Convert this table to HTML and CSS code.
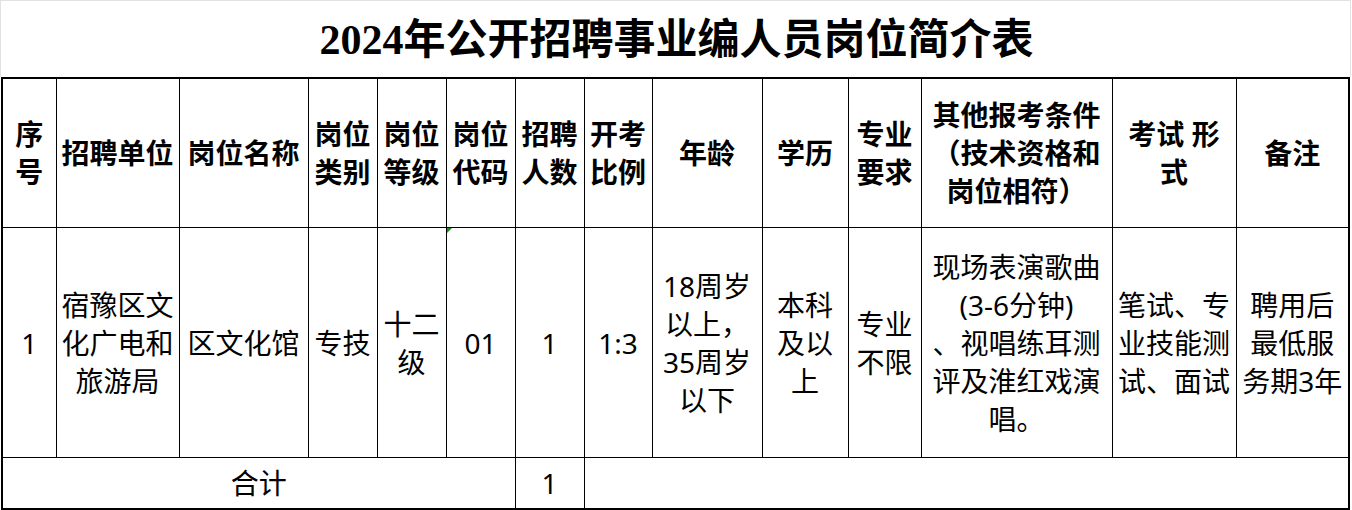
FILE: index.html
```html
<!DOCTYPE html>
<html lang="zh-CN">
<head>
<meta charset="utf-8">
<title>2024年公开招聘事业编人员岗位简介表</title>
<link rel="stylesheet" href="styles.css">
</head>
<body>
<div class="sheet">
  <div class="title"><span class="num">2024</span>年公开招聘事业编人员岗位简介表</div>
  <table class="grid">
    <colgroup>
      <col class="c1"><col class="c2"><col class="c3"><col class="c4"><col class="c5">
      <col class="c6"><col class="c7"><col class="c8"><col class="c9"><col class="c10">
      <col class="c11"><col class="c12"><col class="c13"><col class="c14">
    </colgroup>
    <tr class="head">
      <th>序<br>号</th>
      <th>招聘单位</th>
      <th>岗位名称</th>
      <th>岗位<br>类别</th>
      <th>岗位<br>等级</th>
      <th>岗位<br>代码</th>
      <th>招聘<br>人数</th>
      <th>开考<br>比例</th>
      <th>年龄</th>
      <th>学历</th>
      <th>专业<br>要求</th>
      <th>其他报考条件<br>（技术资格和<br>岗位相符）</th>
      <th>考试 形<br>式</th>
      <th>备注</th>
    </tr>
    <tr class="body">
      <td>1</td>
      <td>宿豫区文<br>化广电和<br>旅游局</td>
      <td>区文化馆</td>
      <td>专技</td>
      <td>十二<br>级</td>
      <td class="flag">01</td>
      <td>1</td>
      <td>1:3</td>
      <td>18周岁<br>以上，<br>35周岁<br>以下</td>
      <td>本科<br>及以<br>上</td>
      <td>专业<br>不限</td>
      <td>现场表演歌曲<br>(3-6分钟)<br>、视唱练耳测<br>评及淮红戏演<br>唱。</td>
      <td>笔试、专<br>业技能测<br>试、面试</td>
      <td>聘用后<br>最低服<br>务期3年</td>
    </tr>
    <tr class="foot">
      <td colspan="6">合计</td>
      <td>1</td>
      <td colspan="7"></td>
    </tr>
  </table>
</div>
</body>
</html>
```
FILE: styles.css
```css
html, body {
  margin: 0;
  padding: 0;
  background: #ffffff;
}
body {
  font-family: "Noto Sans", "Noto Sans CJK SC", sans-serif;
  color: #000000;
}
.sheet {
  width: 1351px;
}
.title {
  height: 75px;
  border-top: 1px solid #e2e2e2;
  border-left: 1px solid #e2e2e2;
  border-right: 1px solid #e2e2e2;
  display: flex;
  align-items: center;
  justify-content: center;
  font-family: "Liberation Serif", "Noto Sans CJK SC", serif;
  font-weight: 700;
  font-size: 42px;
  line-height: 1;
  padding-left: 2px;
  padding-top: 1px;
}
.title .num {
  font-family: "Liberation Serif", serif;
}
.grid {
  border-collapse: collapse;
  table-layout: fixed;
  width: 1348px;
  margin-left: 1px;
  border: 2px solid #000;
}
.grid th, .grid td {
  border: 1px solid #000;
  padding: 0;
  text-align: center;
  vertical-align: middle;
  font-size: 28px;
  line-height: 38px;
  white-space: nowrap;
  overflow: hidden;
}
.grid th {
  font-weight: 700;
}
.grid td {
  font-weight: 400;
}
.c1 { width: 54px; }
.c2 { width: 123px; }
.c3 { width: 129px; }
.c4 { width: 69px; }
.c5 { width: 69px; }
.c6 { width: 69px; }
.c7 { width: 69px; }
.c8 { width: 68px; }
.c9 { width: 110px; }
.c10 { width: 86px; }
.c11 { width: 73px; }
.c12 { width: 191px; }
.c13 { width: 124px; }
.c14 { width: 113px; }
.head th { height: 148px; }
.body td { height: 229px; }
.foot td { height: 50px; }
.flag {
  position: relative;
}
.flag::before {
  content: "";
  position: absolute;
  left: 0;
  top: 0;
  width: 0;
  height: 0;
  border-top: 5px solid #1f8a1f;
  border-right: 5px solid transparent;
}
```
